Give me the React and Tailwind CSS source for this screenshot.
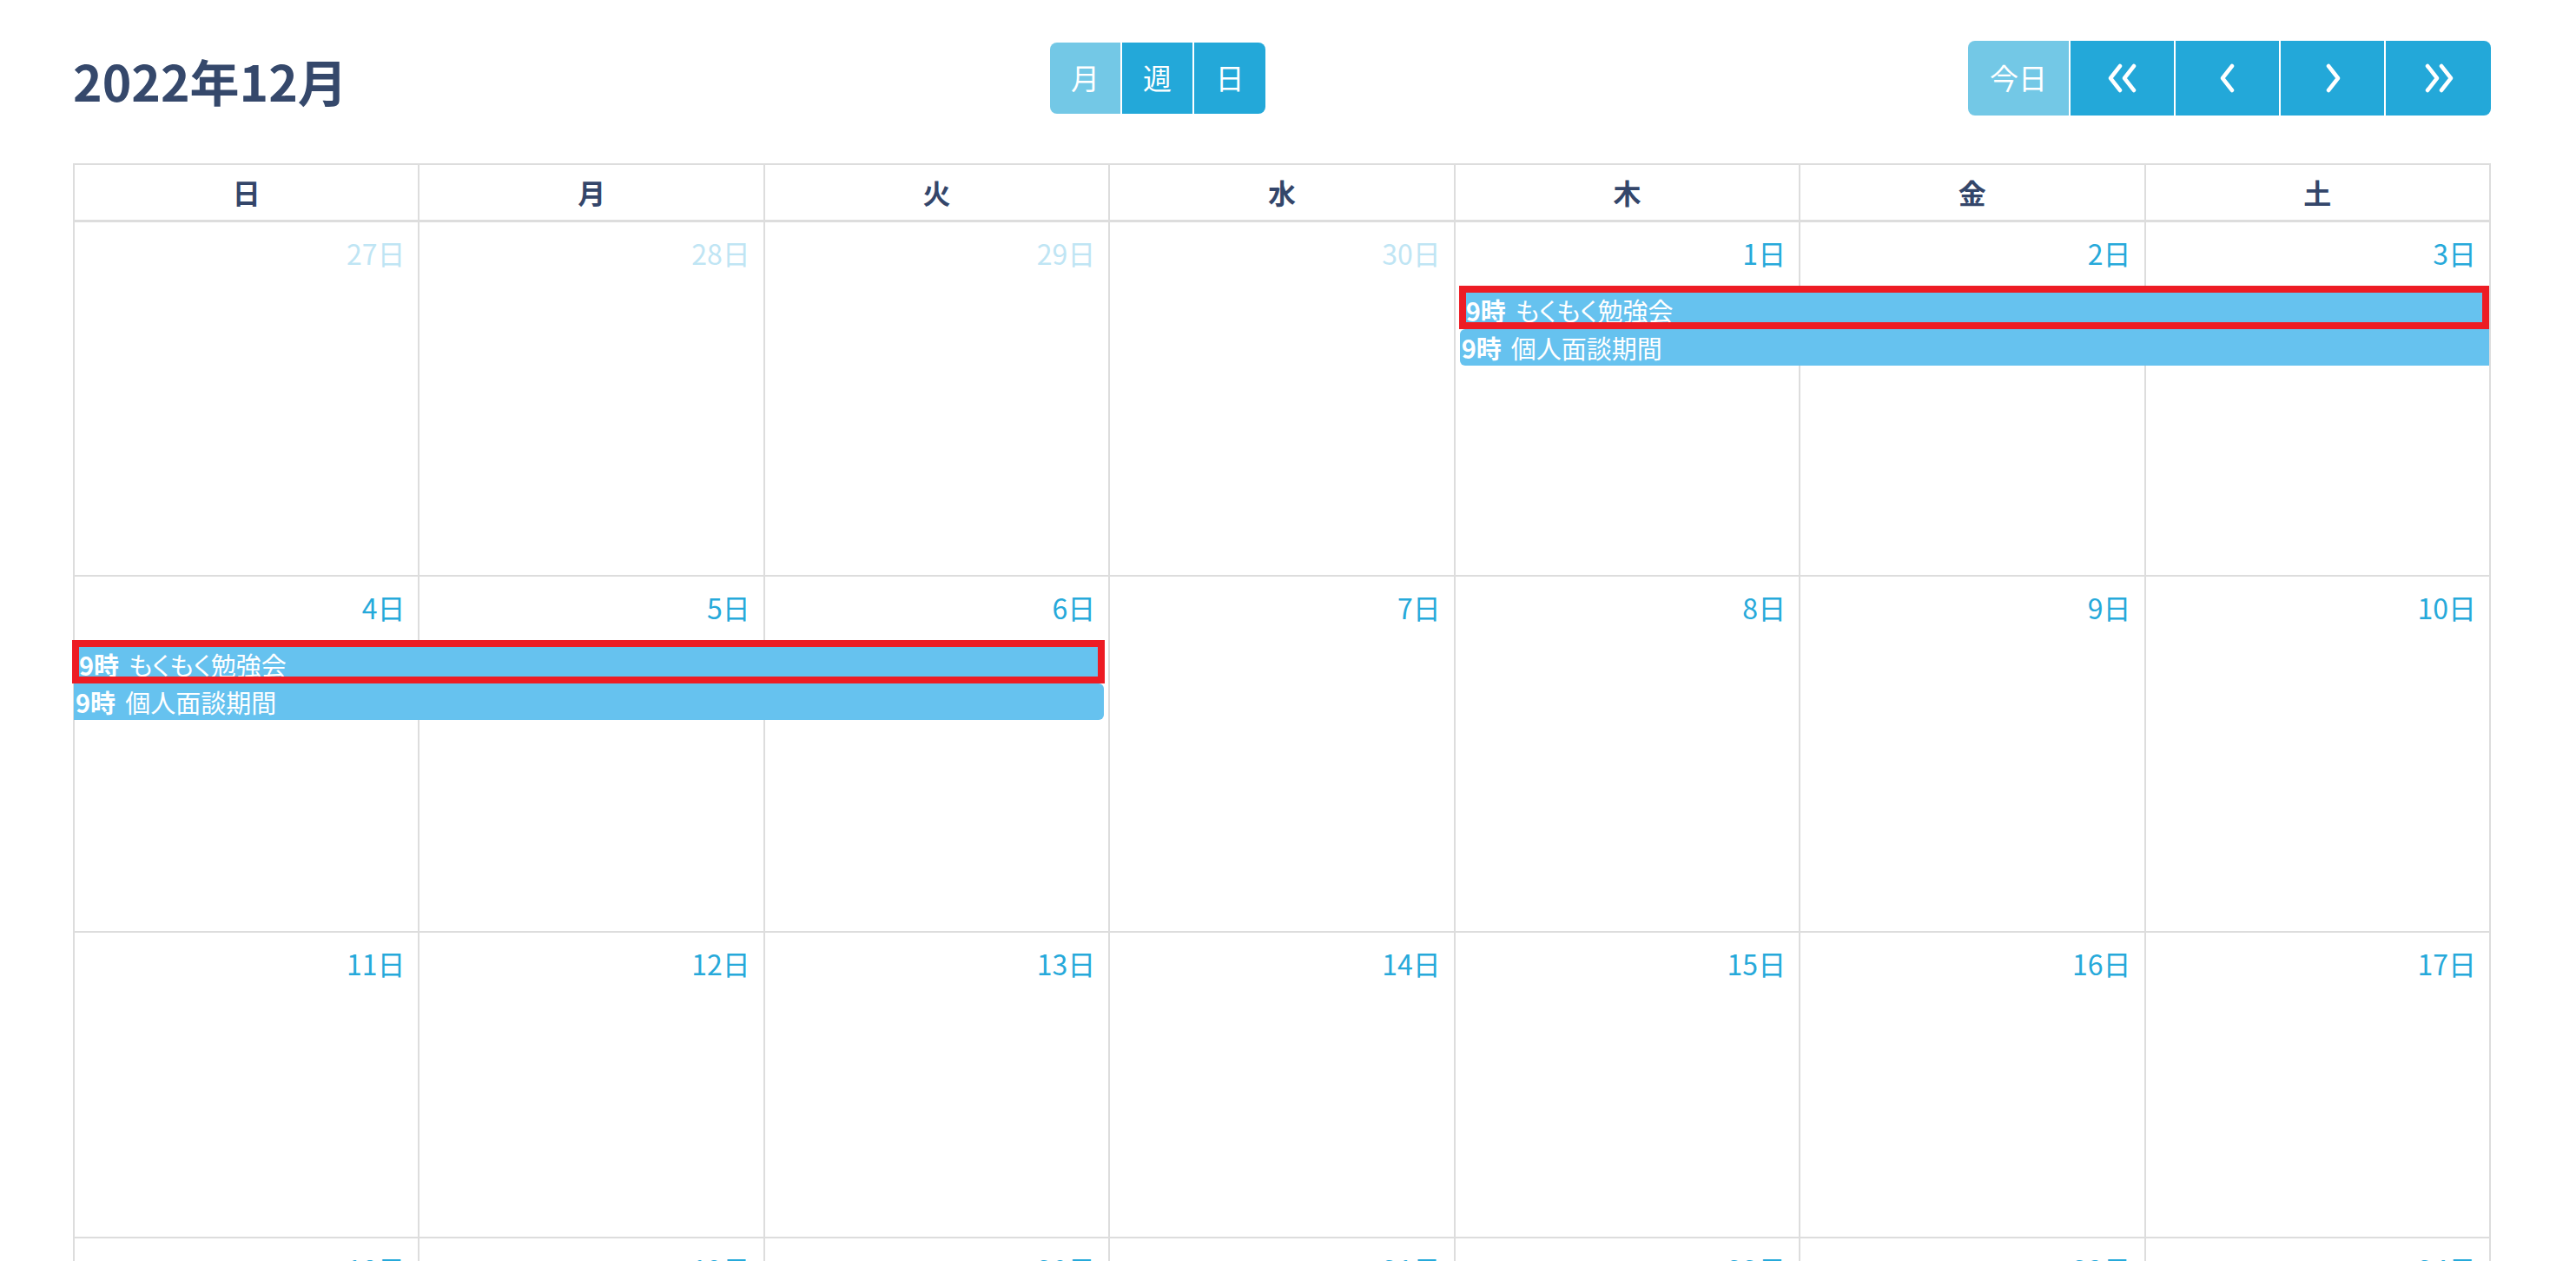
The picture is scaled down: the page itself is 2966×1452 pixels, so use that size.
import React from "react";

const DOW = ["日", "月", "火", "水", "木", "金", "土"];

const COL_START = ["col-start-1", "col-start-2", "col-start-3", "col-start-4", "col-start-5", "col-start-6", "col-start-7"];

// weeks shown in the month grid
const WEEKS = [
  {
    h: "h-[408px]",
    days: [
      { d: 27, other: true }, { d: 28, other: true }, { d: 29, other: true }, { d: 30, other: true },
      { d: 1 }, { d: 2 }, { d: 3 },
    ],
    events: [
      { title: "もくもく勉強会", place: "col-start-5 col-span-3", box: "ml-[4px] mr-[2px]", outlined: true },
      { title: "個人面談期間", place: "col-start-5 col-span-3", box: "ml-[5px] mr-[2px] rounded-l-[6px]" },
    ],
  },
  {
    h: "h-[410px]",
    days: [4, 5, 6, 7, 8, 9, 10].map((d) => ({ d })),
    events: [
      { title: "もくもく勉強会", place: "col-start-1 col-span-3", box: "ml-[-3px] mr-[6px]", outlined: true },
      { title: "個人面談期間", place: "col-start-1 col-span-3", box: "ml-[-1px] mr-[7px] rounded-r-[6px]" },
    ],
  },
  { h: "h-[352px]", days: [11, 12, 13, 14, 15, 16, 17].map((d) => ({ d })), events: [] },
  { h: "h-[352px]", days: [18, 19, 20, 21, 22, 23, 24].map((d) => ({ d })), events: [] },
];

function ChevronLeft() {
  return (
    <svg width="20" height="34" viewBox="0 0 20 34" fill="none" stroke="currentColor" strokeWidth="4.5" strokeLinecap="round" strokeLinejoin="round">
      <path d="M15 3 L4 17 L15 31" />
    </svg>
  );
}

function ChevronRight() {
  return (
    <svg width="20" height="34" viewBox="0 0 20 34" fill="none" stroke="currentColor" strokeWidth="4.5" strokeLinecap="round" strokeLinejoin="round">
      <path d="M5 3 L16 17 L5 31" />
    </svg>
  );
}

function ChevronsLeft() {
  return (
    <svg width="36" height="34" viewBox="0 0 36 34" fill="none" stroke="currentColor" strokeWidth="4.5" strokeLinecap="round" strokeLinejoin="round">
      <path d="M15 3 L4 17 L15 31 M31 3 L20 17 L31 31" />
    </svg>
  );
}

function ChevronsRight() {
  return (
    <svg width="36" height="34" viewBox="0 0 36 34" fill="none" stroke="currentColor" strokeWidth="4.5" strokeLinecap="round" strokeLinejoin="round">
      <path d="M5 3 L16 17 L5 31 M21 3 L32 17 L21 31" />
    </svg>
  );
}

function EventBar({ ev, row }) {
  if (ev.outlined) {
    return (
      <div className={`${row} ${ev.place} ${ev.box} z-10 h-[50px] border-[8px] border-[#ed1c24] bg-[#66c2ef] overflow-hidden`}>
        <div className="leading-[40px] text-[29px] text-white whitespace-nowrap">
          <span className="font-bold">9時</span>
          <span className="ml-[11px]">{ev.title}</span>
        </div>
      </div>
    );
  }
  return (
    <div className={`${row} ${ev.place} ${ev.box} z-10 h-[42px] bg-[#66c2ef] overflow-hidden pl-[2px]`}>
      <div className="leading-[42px] text-[29px] text-white whitespace-nowrap">
        <span className="font-bold">9時</span>
        <span className="ml-[11px]">{ev.title}</span>
      </div>
    </div>
  );
}

function Week({ week }) {
  return (
    <div className={`grid grid-cols-7 grid-rows-[73px_50px_42px_1fr] ${week.h}`}>
      {week.days.map((day, i) => (
        <div key={`bg-${i}`} className={`${COL_START[i]} row-span-full border-r-2 border-b-2 border-[#dddddd]`} />
      ))}
      {week.days.map((day, i) => (
        <div
          key={`n-${i}`}
          className={`${COL_START[i]} row-start-1 z-10 pr-[17px] pt-[15px] text-right text-[32px] leading-[40px] ${
            day.other ? "text-[#bfe5f4]" : "text-[#26a9da]"
          }`}
        >
          {day.d}日
        </div>
      ))}
      {week.events.map((ev, i) => (
        <EventBar key={`e-${i}`} ev={ev} row={i === 0 ? "row-start-2" : "row-start-3"} />
      ))}
    </div>
  );
}

export default function App() {
  return (
    <div className="min-h-screen bg-white pl-[84px] pt-[47px] font-['Noto_Sans_CJK_JP','Noto_Sans',sans-serif] [font-feature-settings:'palt'] text-[#34466a]">
      <div className="w-[2784px]">
        {/* toolbar */}
        <div className="flex items-center justify-between h-[86px] mb-[55px]">
          <h2 className="mt-[4px] text-[57px] font-bold leading-none text-[#35486b]">2022年12月</h2>

          <div className="flex gap-[2px] h-[82px]">
            <button className="w-[81px] rounded-l-[8px] bg-[#73c8e6] text-white text-[33px]">月</button>
            <button className="w-[81px] bg-[#23a8d9] text-white text-[33px]">週</button>
            <button className="w-[82px] rounded-r-[8px] bg-[#23a8d9] text-white text-[33px]">日</button>
          </div>

          <div className="flex gap-[2px] h-[86px]">
            <button className="w-[116px] rounded-l-[8px] bg-[#73c8e6] text-white text-[33px]">今日</button>
            <button className="w-[119px] flex items-center justify-center bg-[#23a8d9] text-white">
              <ChevronsLeft />
            </button>
            <button className="w-[119px] flex items-center justify-center bg-[#23a8d9] text-white">
              <ChevronLeft />
            </button>
            <button className="w-[119px] flex items-center justify-center bg-[#23a8d9] text-white">
              <ChevronRight />
            </button>
            <button className="w-[121px] flex items-center justify-center rounded-r-[8px] bg-[#23a8d9] text-white">
              <ChevronsRight />
            </button>
          </div>
        </div>

        {/* month grid */}
        <div className="border-l-2 border-t-2 border-[#dddddd]">
          <div className="grid grid-cols-7 h-[66px]">
            {DOW.map((d) => (
              <div key={d} className="flex items-center justify-center pb-[2px] border-r-2 border-b-[3px] border-[#dddddd] text-[32px] font-bold text-[#34466a]">
                {d}
              </div>
            ))}
          </div>
          {WEEKS.map((w, i) => (
            <Week key={i} week={w} />
          ))}
        </div>
      </div>
    </div>
  );
}
